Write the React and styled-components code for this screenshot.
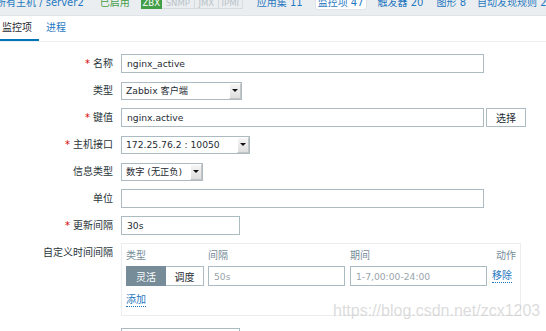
import React from 'react';
import styled, { createGlobalStyle } from 'styled-components';

const LINK = '#1f78c1';
const TEXT = '#1f2c33';
const BORDER = '#acbbc2';
const MUTED = '#768d99';

const GlobalStyle = createGlobalStyle`
  *, *::before, *::after { box-sizing: border-box; }
  html, body { margin: 0; padding: 0; background: #fff; }
  body {
    font-family: "DejaVu Sans", "Noto Sans CJK SC", sans-serif;
    font-size: 10px;
    color: ${TEXT};
  }
`;

const Page = styled.div`
  position: relative;
  width: 546px;
  height: 331px;
  overflow: hidden;
  background: #fff;
`;

const Header = styled.div`
  display: flex;
  align-items: flex-end;
  height: 16px;
  padding-bottom: 6px;
  background: #ebeef0;
  border-bottom: 1px solid #dfe4e7;
  white-space: nowrap;
  overflow: hidden;
`;

const HeaderItem = styled.span`
  flex-shrink: 0;
  margin-left: ${(p) => p.$ml || 0}px;
  color: ${(p) => p.$color || LINK};
  line-height: 12px;
`;

const ActiveHeaderTab = styled.span`
  flex-shrink: 0;
  margin-left: ${(p) => p.$ml || 0}px;
  margin-bottom: -1px;
  padding: 0 2px;
  line-height: 12px;
  color: ${LINK};
  background: #fff;
  border: 1px solid #dfe4e7;
  border-top: none;
  border-radius: 0 0 3px 3px;
`;

const BadgeGroup = styled.span`
  display: flex;
  flex-shrink: 0;
  margin-left: ${(p) => p.$ml || 0}px;
`;

const Badge = styled.span`
  width: ${(p) => p.$w}px;
  font-size: 8.5px;
  line-height: 10px;
  padding: 0;
  text-align: center;
  overflow: hidden;
  border: 1px solid ${(p) => (p.$on ? '#429e47' : '#d5dce0')};
  background: ${(p) => (p.$on ? '#429e47' : 'transparent')};
  color: ${(p) => (p.$on ? '#fff' : '#b9c4ca')};
  & + & { border-left: none; }
`;

const TabBar = styled.div`
  display: flex;
  border-bottom: 1px solid #ebeef0;
`;

const Tab = styled.div`
  padding: 6px 7px 5px;
  line-height: 12px;
  margin-left: ${(p) => p.$ml || 0}px;
  color: ${(p) => (p.$active ? TEXT : LINK)};
  border-bottom: 2px solid ${(p) => (p.$active ? '#0275b8' : 'transparent')};
`;

const Form = styled.div`
  padding-top: 12px;
`;

const Row = styled.div`
  display: flex;
  align-items: ${(p) => (p.$top ? 'flex-start' : 'center')};
  min-height: 19px;
  margin-bottom: ${(p) => p.$mb || 8}px;
`;

const Label = styled.div`
  flex: 0 0 113px;
  margin-right: 8px;
  text-align: right;
  line-height: 12px;
  padding-top: ${(p) => p.$pt || 0}px;
  white-space: nowrap;
  color: #2a3439;
`;

const Req = styled.span`
  color: #d40000;
  margin-right: 3px;
`;

const TextInput = styled.input`
  width: ${(p) => p.$w}px;
  height: ${(p) => p.$h || 19}px;
  margin: 0;
  padding: 0 5px;
  border: 1px solid ${BORDER};
  border-radius: 0;
  background: #fff;
  font-family: inherit;
  font-size: 9.2px;
  color: ${TEXT};
  outline: none;
  &::placeholder { color: #9aa5ab; opacity: 1; }
`;

const Button = styled.button`
  width: 40px;
  height: 19px;
  margin: 0 0 0 2px;
  padding: 0;
  border: 1px solid ${BORDER};
  border-radius: 0;
  background: #fff;
  font-family: inherit;
  font-size: 10px;
  color: ${TEXT};
`;

const SelectBox = styled.div`
  display: flex;
  align-items: stretch;
  width: ${(p) => p.$w}px;
  height: 18px;
  border: 1px solid ${BORDER};
  background: #fff;
`;

const SelectText = styled.span`
  flex: 1;
  padding-left: 4px;
  font-size: 9.2px;
  line-height: 16px;
  white-space: nowrap;
  overflow: hidden;
`;

const SelectArrow = styled.span`
  flex: 0 0 12px;
  display: flex;
  align-items: center;
  justify-content: center;
  background: linear-gradient(#f6f6f6, #dedede);
  border: 1px solid #c4c4c4;
  border-top-color: #fff;
  border-left-color: #fff;
  &::after {
    content: '';
    border-left: 3px solid transparent;
    border-right: 3px solid transparent;
    border-top: 3px solid #111;
  }
`;

const IntervalBox = styled.div`
  width: 400px;
  border: 1px solid #ebeef0;
  padding: 6px 4px 8px;
`;

const IntervalGrid = styled.div`
  display: grid;
  grid-template-columns: 77px 137px 137px auto;
  column-gap: 5px;
  row-gap: 4px;
  align-items: center;
`;

const ColHead = styled.div`
  color: ${MUTED};
  line-height: 12px;
  text-align: ${(p) => p.$align || 'left'};
`;

const Segmented = styled.div`
  display: flex;
  height: 20px;
  width: 78px;
`;

const Segment = styled.div`
  flex: 0 0 ${(p) => p.$w}px;
  display: flex;
  align-items: center;
  justify-content: center;
  border: 1px solid ${(p) => (p.$on ? MUTED : BORDER)};
  background: ${(p) => (p.$on ? MUTED : '#fff')};
  color: ${(p) => (p.$on ? '#fff' : TEXT)};
  & + & { border-left: none; }
`;

const DottedLink = styled.span`
  display: inline-block;
  color: ${LINK};
  line-height: 12px;
  border-bottom: 1px dotted ${LINK};
  justify-self: ${(p) => p.$justify || 'start'};
`;

const AddLine = styled.div`
  margin-top: 8px;
`;

const Watermark = styled.div`
  position: absolute;
  left: 333px;
  top: 302px;
  font-family: "Liberation Sans", Arial, sans-serif;
  font-size: 16px;
  color: rgba(190, 190, 190, 0.55);
  pointer-events: none;
  white-space: nowrap;
`;

function Select({ w, children }) {
  return (
    <SelectBox $w={w}>
      <SelectText>{children}</SelectText>
      <SelectArrow />
    </SelectBox>
  );
}

export default function App() {
  return (
    <>
      <GlobalStyle />
      <Page>
        <Header>
          <HeaderItem $ml={-4}>所有主机 / server2</HeaderItem>
          <HeaderItem $ml={16} $color="#429e47">已启用</HeaderItem>
          <BadgeGroup $ml={11}>
            <Badge $on $w={21}>ZBX</Badge>
            <Badge $w={33}>SNMP</Badge>
            <Badge $w={24}>JMX</Badge>
            <Badge $w={24}>IPMI</Badge>
          </BadgeGroup>
          <HeaderItem $ml={14}>应用集 11</HeaderItem>
          <ActiveHeaderTab $ml={12}>监控项 47</ActiveHeaderTab>
          <HeaderItem $ml={11}>触发器 20</HeaderItem>
          <HeaderItem $ml={13}>图形 8</HeaderItem>
          <HeaderItem $ml={11}>自动发现规则 2</HeaderItem>
        </Header>

        <TabBar>
          <Tab $active $ml={-5}>监控项</Tab>
          <Tab>进程</Tab>
        </TabBar>

        <Form>
          <Row>
            <Label><Req>*</Req>名称</Label>
            <TextInput $w={363} readOnly value="nginx_active" />
          </Row>
          <Row>
            <Label>类型</Label>
            <Select w={121}>Zabbix 客户端</Select>
          </Row>
          <Row>
            <Label><Req>*</Req>键值</Label>
            <TextInput $w={363} readOnly value="nginx.active" />
            <Button>选择</Button>
          </Row>
          <Row>
            <Label><Req>*</Req>主机接口</Label>
            <Select w={129}>172.25.76.2 : 10050</Select>
          </Row>
          <Row>
            <Label>信息类型</Label>
            <Select w={82}>数字 (无正负)</Select>
          </Row>
          <Row>
            <Label>单位</Label>
            <TextInput $w={363} readOnly value="" />
          </Row>
          <Row>
            <Label><Req>*</Req>更新间隔</Label>
            <TextInput $w={119} readOnly value="30s" />
          </Row>
          <Row $top $mb={12}>
            <Label $pt={4}>自定义时间间隔</Label>
            <IntervalBox>
              <IntervalGrid>
                <ColHead>类型</ColHead>
                <ColHead>间隔</ColHead>
                <ColHead>期间</ColHead>
                <ColHead $align="right">动作</ColHead>
                <Segmented>
                  <Segment $on $w={40}>灵活</Segment>
                  <Segment $w={38}>调度</Segment>
                </Segmented>
                <TextInput $w={137} $h={20} readOnly placeholder="50s" />
                <TextInput $w={137} $h={20} readOnly placeholder="1-7,00:00-24:00" />
                <DottedLink $justify="start">移除</DottedLink>
              </IntervalGrid>
              <AddLine>
                <DottedLink>添加</DottedLink>
              </AddLine>
            </IntervalBox>
          </Row>
          <Row>
            <Label>历史数据保留时长</Label>
            <TextInput $w={119} readOnly value="90d" />
          </Row>
        </Form>

        <Watermark>https://blog.csdn.net/zcx1203</Watermark>
      </Page>
    </>
  );
}
